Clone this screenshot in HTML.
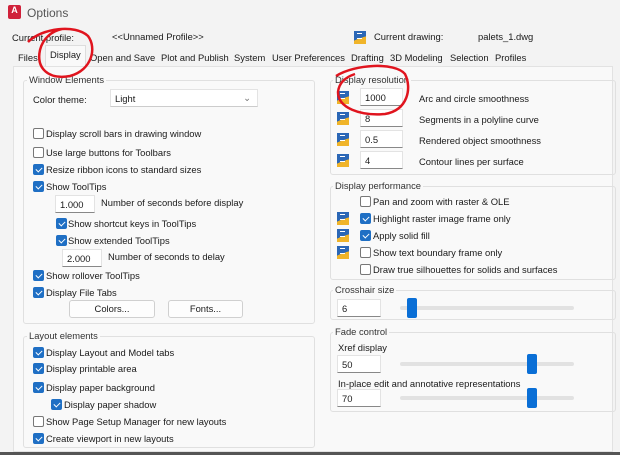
<!DOCTYPE html>
<html><head><style>
*{box-sizing:border-box;margin:0;padding:0}
body{width:620px;height:455px;overflow:hidden;background:#f3f3f3;font-family:"Liberation Sans",sans-serif;font-size:9.4px;color:#1a1a1a;position:relative}
.a{position:absolute;white-space:nowrap}
.t{margin-top:1px}
.panel{position:absolute;left:13px;top:66px;width:600px;height:386px;background:#f9f9f9;border:1px solid #e2e2e2}
.grp{position:absolute;border:1px solid #e0e0e0;border-radius:3px}
.gt{position:absolute;background:#f9f9f9;padding:0 2px;color:#333}
.cb{position:absolute;width:11px;height:11px;border:1px solid #777;border-radius:2px;background:#fff}
.cb.on{background:#1f6fc4;border-color:#1f6fc4}
.cb.on::after{content:"";position:absolute;left:3px;top:1px;width:3px;height:5px;border:solid #fff;border-width:0 1.3px 1.3px 0;transform:rotate(45deg)}
.in{position:absolute;background:#fff;border:1px solid #e3e3e3;border-bottom:1px solid #888;padding:3px 4px;height:18px;font-size:9.4px}
.btn{position:absolute;background:#fdfdfd;border:1px solid #d0d0d0;border-radius:3px;text-align:center;line-height:16px;height:18px}
.ic{position:absolute;width:12px;height:13px;background:linear-gradient(160deg,#2b67b6 0 55%,#f0b429 55%)}
.ic::after{content:"";position:absolute;left:3px;top:2px;width:5px;height:4px;border:1px solid #fff;border-width:1px 0 1px 0}
.tr{position:absolute;height:4px;background:#e2e2e2;border-radius:2px}
.th{position:absolute;width:10px;height:20px;background:#0a6fd6;border-radius:2px}
</style></head><body>
<div class="a" style="left:8px;top:5px;width:13px;height:14px;background:#d0213a;border-radius:2px;color:#fff;font-size:9px;font-weight:bold;text-align:center;line-height:11px">A</div>
<div class="a" style="left:27px;top:6px;font-size:12px;color:#555">Options</div>
<div class="a" style="left:12px;top:32px">Current profile:</div>
<div class="a" style="left:112px;top:31px">&lt;&lt;Unnamed Profile&gt;&gt;</div>
<div class="ic" style="left:354px;top:31px"></div>
<div class="a" style="left:374px;top:31px">Current drawing:</div>
<div class="a" style="left:478px;top:31px">palets_1.dwg</div>
<div class="a" style="left:45px;top:45px;width:41px;height:22px;background:#f9f9f9;border:1px solid #ddd;border-bottom:none"></div>
<div class="a" style="left:18px;top:52px">Files</div>
<div class="a" style="left:50px;top:49px">Display</div>
<div class="a" style="left:90px;top:52px">Open and Save</div>
<div class="a" style="left:161px;top:52px">Plot and Publish</div>
<div class="a" style="left:234px;top:52px">System</div>
<div class="a" style="left:272px;top:52px">User Preferences</div>
<div class="a" style="left:351px;top:52px">Drafting</div>
<div class="a" style="left:390px;top:52px">3D Modeling</div>
<div class="a" style="left:450px;top:52px">Selection</div>
<div class="a" style="left:495px;top:52px">Profiles</div>
<div class="panel"></div>

<div class="grp" style="left:23px;top:80px;width:292px;height:244px"></div>
<div class="gt" style="left:27px;top:74px">Window Elements</div>
<div class="a" style="left:33px;top:94px">Color theme:</div>
<div class="in" style="left:110px;top:89px;width:148px;border-bottom-color:#ccc;padding-top:3px">Light<span style="position:absolute;right:6px;top:2px;color:#777">&#8964;</span></div>
<div class="cb" style="left:33px;top:128px"></div><div class="a t" style="left:46px;top:127px">Display scroll bars in drawing window</div>
<div class="cb" style="left:33px;top:147px"></div><div class="a t" style="left:46px;top:146px">Use large buttons for Toolbars</div>
<div class="cb on" style="left:33px;top:164px"></div><div class="a t" style="left:46px;top:163px">Resize ribbon icons to standard sizes</div>
<div class="cb on" style="left:33px;top:181px"></div><div class="a t" style="left:46px;top:180px">Show ToolTips</div>
<div class="in" style="left:55px;top:195px;width:40px">1.000</div><div class="a" style="left:101px;top:197px">Number of seconds before display</div>
<div class="cb on" style="left:56px;top:218px"></div><div class="a t" style="left:68px;top:217px">Show shortcut keys in ToolTips</div>
<div class="cb on" style="left:56px;top:235px"></div><div class="a t" style="left:68px;top:234px">Show extended ToolTips</div>
<div class="in" style="left:62px;top:249px;width:40px">2.000</div><div class="a" style="left:108px;top:251px">Number of seconds to delay</div>
<div class="cb on" style="left:33px;top:270px"></div><div class="a t" style="left:46px;top:269px">Show rollover ToolTips</div>
<div class="cb on" style="left:33px;top:287px"></div><div class="a t" style="left:46px;top:286px">Display File Tabs</div>
<div class="btn" style="left:69px;top:300px;width:86px">Colors...</div>
<div class="btn" style="left:168px;top:300px;width:75px">Fonts...</div>

<div class="grp" style="left:23px;top:336px;width:292px;height:112px"></div>
<div class="gt" style="left:27px;top:330px">Layout elements</div>
<div class="cb on" style="left:33px;top:347px"></div><div class="a t" style="left:46px;top:346px">Display Layout and Model tabs</div>
<div class="cb on" style="left:33px;top:363px"></div><div class="a t" style="left:46px;top:362px">Display printable area</div>
<div class="cb on" style="left:33px;top:382px"></div><div class="a t" style="left:46px;top:381px">Display paper background</div>
<div class="cb on" style="left:51px;top:399px"></div><div class="a t" style="left:64px;top:398px">Display paper shadow</div>
<div class="cb" style="left:33px;top:416px"></div><div class="a t" style="left:46px;top:415px">Show Page Setup Manager for new layouts</div>
<div class="cb on" style="left:33px;top:433px"></div><div class="a t" style="left:46px;top:432px">Create viewport in new layouts</div>

<div class="grp" style="left:330px;top:80px;width:286px;height:95px"></div>
<div class="gt" style="left:333px;top:74px">Display resolution</div>
<div class="ic" style="left:337px;top:91px"></div><div class="in" style="left:360px;top:88px;width:43px">1000</div><div class="a" style="left:419px;top:93px">Arc and circle smoothness</div>
<div class="ic" style="left:337px;top:112px"></div><div class="in" style="left:360px;top:109px;width:43px">8</div><div class="a" style="left:419px;top:114px">Segments in a polyline curve</div>
<div class="ic" style="left:337px;top:133px"></div><div class="in" style="left:360px;top:130px;width:43px">0.5</div><div class="a" style="left:419px;top:135px">Rendered object smoothness</div>
<div class="ic" style="left:337px;top:154px"></div><div class="in" style="left:360px;top:151px;width:43px">4</div><div class="a" style="left:419px;top:156px">Contour lines per surface</div>

<div class="grp" style="left:330px;top:186px;width:286px;height:94px"></div>
<div class="gt" style="left:333px;top:180px">Display performance</div>
<div class="cb" style="left:360px;top:196px"></div><div class="a t" style="left:373px;top:195px">Pan and zoom with raster &amp; OLE</div>
<div class="ic" style="left:337px;top:212px"></div><div class="cb on" style="left:360px;top:213px"></div><div class="a t" style="left:373px;top:212px">Highlight raster image frame only</div>
<div class="ic" style="left:337px;top:229px"></div><div class="cb on" style="left:360px;top:230px"></div><div class="a t" style="left:373px;top:229px">Apply solid fill</div>
<div class="ic" style="left:337px;top:246px"></div><div class="cb" style="left:360px;top:247px"></div><div class="a t" style="left:373px;top:246px">Show text boundary frame only</div>
<div class="cb" style="left:360px;top:264px"></div><div class="a t" style="left:373px;top:263px">Draw true silhouettes for solids and surfaces</div>

<div class="grp" style="left:330px;top:290px;width:286px;height:30px"></div>
<div class="gt" style="left:333px;top:284px">Crosshair size</div>
<div class="in" style="left:337px;top:299px;width:44px">6</div>
<div class="tr" style="left:400px;top:306px;width:174px"></div><div class="th" style="left:407px;top:298px"></div>

<div class="grp" style="left:330px;top:332px;width:286px;height:80px"></div>
<div class="gt" style="left:333px;top:326px">Fade control</div>
<div class="a" style="left:338px;top:342px">Xref display</div>
<div class="in" style="left:337px;top:355px;width:44px">50</div>
<div class="tr" style="left:400px;top:362px;width:174px"></div><div class="th" style="left:527px;top:354px"></div>
<div class="a" style="left:338px;top:378px">In-place edit and annotative representations</div>
<div class="in" style="left:337px;top:389px;width:44px">70</div>
<div class="tr" style="left:400px;top:396px;width:174px"></div><div class="th" style="left:527px;top:388px"></div>

<div class="a" style="left:0;top:452px;width:620px;height:3px;background:#555"></div>

<svg class="a" style="left:0;top:0" width="620" height="455">
<path d="M28,42 C42,28 75,24 88,36 C97,48 92,70 70,76 C48,80 36,68 40,50 C43,38 52,31 62,29" fill="none" stroke="#e0141e" stroke-width="2.5"/>
<path d="M336,76 C355,64 395,62 405,74 C412,88 408,110 385,114 C360,116 338,108 338,92 C339,82 346,77 355,74" fill="none" stroke="#e0141e" stroke-width="2.5"/>
</svg>
</body></html>
